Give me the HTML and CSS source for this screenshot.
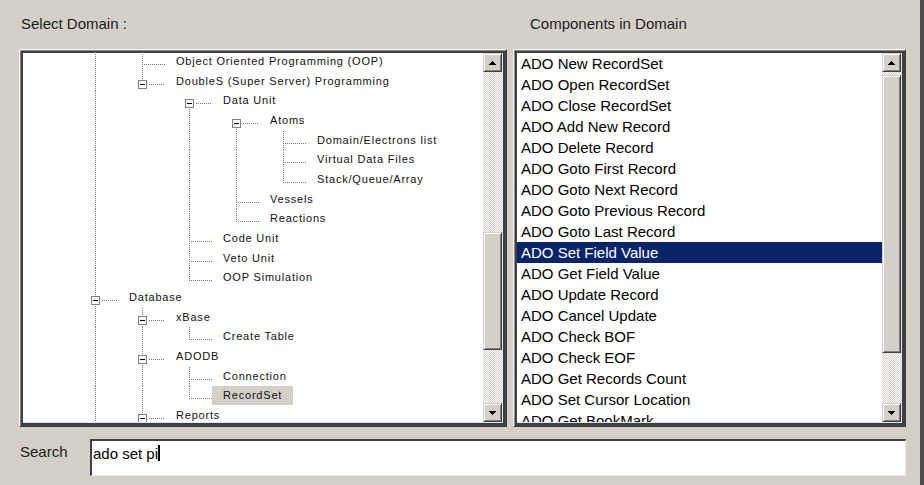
FILE: index.html
```html
<!DOCTYPE html>
<html>
<head>
<meta charset="utf-8">
<link rel="stylesheet" href="styles.css">
</head>
<body>
<div class="window">
  <div class="head">
    <div class="title title-left">Select Domain :</div>
    <div class="title title-right">Components in Domain</div>
  </div>
  <div class="panels">
    <div class="panel panel-left">
      <div class="tree">
        <div class="row"><span class="g v"></span><span class="c tee"></span><span class="label">Object Oriented Programming (OOP)</span></div>
        <div class="row"><span class="g v"></span><span class="c ell box"></span><span class="label">DoubleS (Super Server) Programming</span></div>
        <div class="row"><span class="g v"></span><span class="g"></span><span class="c first box"></span><span class="label">Data Unit</span></div>
        <div class="row"><span class="g v"></span><span class="g"></span><span class="g v"></span><span class="c first box"></span><span class="label">Atoms</span></div>
        <div class="row"><span class="g v"></span><span class="g"></span><span class="g v"></span><span class="g v"></span><span class="c tee"></span><span class="label">Domain/Electrons list</span></div>
        <div class="row"><span class="g v"></span><span class="g"></span><span class="g v"></span><span class="g v"></span><span class="c tee"></span><span class="label">Virtual Data Files</span></div>
        <div class="row"><span class="g v"></span><span class="g"></span><span class="g v"></span><span class="g v"></span><span class="c ell"></span><span class="label">Stack/Queue/Array</span></div>
        <div class="row"><span class="g v"></span><span class="g"></span><span class="g v"></span><span class="c tee"></span><span class="label">Vessels</span></div>
        <div class="row"><span class="g v"></span><span class="g"></span><span class="g v"></span><span class="c ell"></span><span class="label">Reactions</span></div>
        <div class="row"><span class="g v"></span><span class="g"></span><span class="c tee"></span><span class="label">Code Unit</span></div>
        <div class="row"><span class="g v"></span><span class="g"></span><span class="c tee"></span><span class="label">Veto Unit</span></div>
        <div class="row"><span class="g v"></span><span class="g"></span><span class="c ell"></span><span class="label">OOP Simulation</span></div>
        <div class="row"><span class="c tee box"></span><span class="label">Database</span></div>
        <div class="row"><span class="g v"></span><span class="c tee box"></span><span class="label">xBase</span></div>
        <div class="row"><span class="g v"></span><span class="g v"></span><span class="c ell"></span><span class="label">Create Table</span></div>
        <div class="row"><span class="g v"></span><span class="c tee box"></span><span class="label">ADODB</span></div>
        <div class="row"><span class="g v"></span><span class="g v"></span><span class="c tee"></span><span class="label">Connection</span></div>
        <div class="row"><span class="g v"></span><span class="g v"></span><span class="c ell"></span><span class="label selected">RecordSet</span></div>
        <div class="row"><span class="g v"></span><span class="c tee box"></span><span class="label">Reports</span></div>
      </div>
      <div class="vscroll">
        <div class="sbtn"><svg width="7" height="4" viewBox="0 0 7 4"><path d="M3 0h1v1h1v1h1v1h1v1H0V3h1V2h1V1h1z"/></svg></div>
        <div class="track tl-1"></div>
        <div class="thumb tl-thumb"></div>
        <div class="track fill"></div>
        <div class="sbtn"><svg width="7" height="4" viewBox="0 0 7 4"><path d="M0 0h7v1H6v1H5v1H4v1H3V3H2V2H1V1H0z"/></svg></div>
      </div>
    </div>
    <div class="panel panel-right">
      <div class="list">
        <div class="item">ADO New RecordSet</div>
        <div class="item">ADO Open RecordSet</div>
        <div class="item">ADO Close RecordSet</div>
        <div class="item">ADO Add New Record</div>
        <div class="item">ADO Delete Record</div>
        <div class="item">ADO Goto First Record</div>
        <div class="item">ADO Goto Next Record</div>
        <div class="item">ADO Goto Previous Record</div>
        <div class="item">ADO Goto Last Record</div>
        <div class="item active">ADO Set Field Value</div>
        <div class="item">ADO Get Field Value</div>
        <div class="item">ADO Update Record</div>
        <div class="item">ADO Cancel Update</div>
        <div class="item">ADO Check BOF</div>
        <div class="item">ADO Check EOF</div>
        <div class="item">ADO Get Records Count</div>
        <div class="item">ADO Set Cursor Location</div>
        <div class="item">ADO Get BookMark</div>
      </div>
      <div class="vscroll">
        <div class="sbtn"><svg width="7" height="4" viewBox="0 0 7 4"><path d="M3 0h1v1h1v1h1v1h1v1H0V3h1V2h1V1h1z"/></svg></div>
        <div class="track tr-1"></div>
        <div class="thumb tr-thumb"></div>
        <div class="track fill"></div>
        <div class="sbtn"><svg width="7" height="4" viewBox="0 0 7 4"><path d="M0 0h7v1H6v1H5v1H4v1H3V3H2V2H1V1H0z"/></svg></div>
      </div>
    </div>
  </div>
  <div class="search">
    <div class="search-label">Search</div>
    <div class="input"><span class="value">ado set pi</span><span class="caret"></span></div>
  </div>
</div>
</body>
</html>
```

FILE: styles.css
```css
* { box-sizing: border-box; }
html, body { margin: 0; padding: 0; }
body {
  width: 924px;
  height: 485px;
  overflow: hidden;
  background: #d4d0c8;
  font-family: "Liberation Sans", Arial, sans-serif;
  color: #000;
}
.window {
  height: 485px;
  border-right: 4px solid #4c4c4c;
  padding-left: 19px;
}
.head {
  display: flex;
  height: 49px;
}
.title {
  font-size: 15px;
  line-height: 17px;
  padding-top: 15px;
  color: #1c1c1c;
}
.title-left { width: 494px; padding-left: 2px; }
.title-right { padding-left: 17px; }

.panels {
  display: flex;
  gap: 6px;
  height: 378px;
}
.panel {
  display: flex;
  background: #fff;
  border: 1px solid;
  border-color: #f4f4f4 #404040 #404040 #f4f4f4;
  box-shadow:
    inset 1px 1px 0 #8a8a8a,
    inset 3px 3px 0 #404040,
    inset -3px -3px 0 #404040,
    inset -4px -4px 0 #e4e4e4;
  padding: 3px 4px 4px 3px;
}
.panel-left { width: 488px; }
.panel-right { width: 393px; }

.tree {
  flex: 1;
  overflow: hidden;
  margin-top: -1px;
  position: relative;
  z-index: 0;
}
.row {
  display: flex;
  height: 19.67px;
  padding-left: 48px;
  white-space: nowrap;
}
.g, .c {
  position: relative;
  width: 47px;
  flex: none;
  height: 100%;
}
.g.v::before, .c::before {
  content: "";
  position: absolute;
  left: 24px;
  top: 0;
  width: 1px;
  height: 100%;
  background-image: linear-gradient(to bottom, #7c7c7c 50%, transparent 50%);
  background-size: 1px 2px;
}
.c::before { z-index: -1; }
.c.ell::before { height: 13px; }
.c.first::before { top: 12px; height: auto; bottom: 0; }
.c::after {
  content: "";
  position: absolute;
  left: 25px;
  right: 0;
  top: 12px;
  height: 1px;
  background-image: linear-gradient(to right, transparent 50%, #7c7c7c 50%);
  background-size: 2px 1px;
}
.c.box::after { left: 30px; }
.c.box {
  background-image:
    linear-gradient(#000, #000),
    linear-gradient(#fff, #fff),
    linear-gradient(#808080, #808080);
  background-repeat: no-repeat;
  background-size: 5px 1px, 7px 7px, 9px 9px;
  background-position: 22px 12px, 21px 9px, 20px 8px;
}

.label {
  font-size: 11px;
  letter-spacing: 0.8px;
  line-height: 19px;
  height: 19px;
  padding: 0 11px;
  color: #111;
}
.label.selected { background: #d4d0c8; }

.vscroll {
  width: 19px;
  flex: none;
  display: flex;
  flex-direction: column;
}
.sbtn {
  height: 19px;
  flex: none;
  background: #d4d0c8;
  border: 1px solid;
  border-color: #d4d0c8 #404040 #404040 #d4d0c8;
  box-shadow: inset 1px 1px 0 #fff, inset -1px -1px 0 #808080;
  display: flex;
  align-items: center;
  justify-content: center;
}
.sbtn svg { display: block; fill: #000; }
.track {
  flex: none;
  background: conic-gradient(#ffffff 25%, #d4d0c8 0 50%, #ffffff 0 75%, #d4d0c8 0) 0 0 / 2px 2px;
}
.track.fill { flex: 1; }
.thumb {
  flex: none;
  background: #d4d0c8;
  border: 1px solid;
  border-color: #d4d0c8 #404040 #404040 #d4d0c8;
  box-shadow: inset 1px 1px 0 #fff, inset -1px -1px 0 #808080;
}
.tl-1 { height: 160px; }
.tl-thumb { height: 118px; }
.tr-1 { height: 3px; }
.tr-thumb { height: 278px; }

.list {
  flex: 1;
  overflow: hidden;
}
.item {
  height: 21px;
  line-height: 21px;
  font-size: 15px;
  padding-left: 4px;
  white-space: nowrap;
  color: #000;
}
.item.active {
  background: #0a246a;
  color: #fff;
}

.search {
  display: flex;
  align-items: flex-start;
  margin-top: 12px;
  height: 37px;
}
.search-label {
  width: 71px;
  font-size: 15px;
  line-height: 17px;
  padding-top: 4px;
  padding-left: 1px;
  color: #1c1c1c;
}
.input {
  width: 816px;
  height: 37px;
  background: #fff;
  border-style: solid;
  border-width: 2px 1px 1px 2px;
  border-color: #404040 #e8e8e8 #e8e8e8 #404040;
  display: flex;
  align-items: flex-start;
  padding: 4px 0 0 1px;
  font-size: 15px;
  line-height: 17px;
}
.caret {
  display: inline-block;
  width: 2px;
  height: 16px;
  margin-top: 0;
  background: #000;
}
```
